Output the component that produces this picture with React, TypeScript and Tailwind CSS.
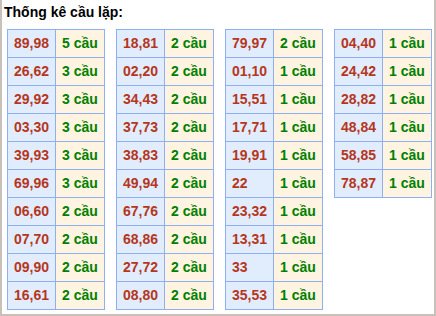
const tables: [string, number][][] = [
  [
    ["89,98", 5],
    ["26,62", 3],
    ["29,92", 3],
    ["03,30", 3],
    ["39,93", 3],
    ["69,96", 3],
    ["06,60", 2],
    ["07,70", 2],
    ["09,90", 2],
    ["16,61", 2],
  ],
  [
    ["18,81", 2],
    ["02,20", 2],
    ["34,43", 2],
    ["37,73", 2],
    ["38,83", 2],
    ["49,94", 2],
    ["67,76", 2],
    ["68,86", 2],
    ["27,72", 2],
    ["08,80", 2],
  ],
  [
    ["79,97", 2],
    ["01,10", 1],
    ["15,51", 1],
    ["17,71", 1],
    ["19,91", 1],
    ["22", 1],
    ["23,32", 1],
    ["13,31", 1],
    ["33", 1],
    ["35,53", 1],
  ],
  [
    ["04,40", 1],
    ["24,42", 1],
    ["28,82", 1],
    ["48,84", 1],
    ["58,85", 1],
    ["78,87", 1],
  ],
];

export default function App() {
  return (
    <div
      className="box-border h-[316px] w-[436px] border-x-2 border-b-2 border-[#c9c1b9] bg-white"
      style={{ fontFamily: '"Liberation Sans", Arial, sans-serif' }}
    >
      <div className="h-[24px] pl-[2px] text-[14px] font-bold leading-[24px] text-black">
        Thống kê cầu lặp:
      </div>
      <div className="mt-[5px] flex items-start gap-[11px] pl-[5px]">
        {tables.map((rows, ti) => (
          <table key={ti} className="border-collapse text-[14px] font-bold">
            <tbody>
              {rows.map(([pair, n]) => (
                <tr key={pair} className="h-[28px]">
                  <td className="w-[48px] border border-[#8fb0f0] bg-[#e1edfd] pl-[6px] text-left text-[#b5361c]">
                    {pair}
                  </td>
                  <td className="w-[49px] border border-[#8fb0f0] bg-[#fef4e1] pl-[6px] text-left text-[#008000]">
                    {n} cầu
                  </td>
                </tr>
              ))}
            </tbody>
          </table>
        ))}
      </div>
    </div>
  );
}
